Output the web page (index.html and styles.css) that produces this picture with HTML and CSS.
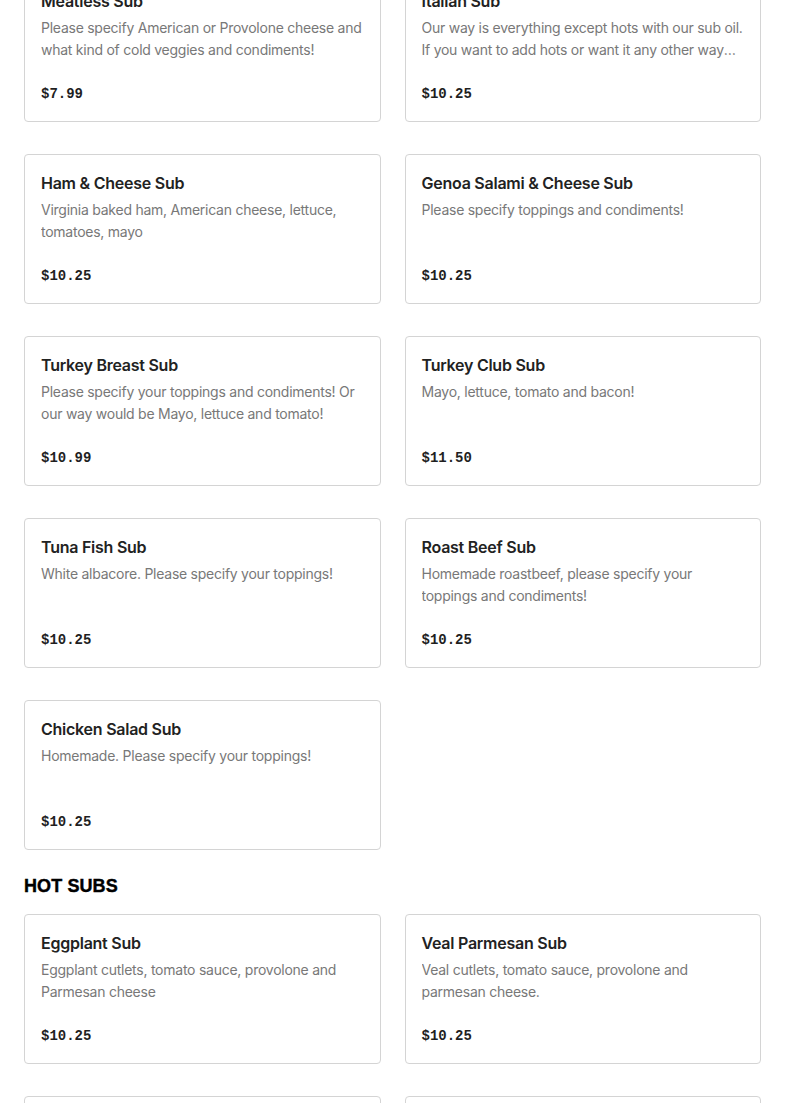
FILE: index.html
```html
<!DOCTYPE html>
<html lang="en">
<head>
<meta charset="utf-8">
<title>Menu</title>
<link rel="stylesheet" href="styles.css">
</head>
<body>
<main class="menu">
  <section class="section">
    <div class="grid">
      <article class="card">
        <h3 class="card-title">Meatless Sub</h3>
        <p class="card-desc">Please specify American or Provolone cheese and what kind of cold veggies and condiments!</p>
        <div class="card-price">$7.99</div>
      </article>
      <article class="card">
        <h3 class="card-title">Italian Sub</h3>
        <p class="card-desc">Our way is everything except hots with our sub oil. If you want to add hots or want it any other way please specify!</p>
        <div class="card-price">$10.25</div>
      </article>
      <article class="card">
        <h3 class="card-title">Ham &amp; Cheese Sub</h3>
        <p class="card-desc">Virginia baked ham, American cheese, lettuce, tomatoes, mayo</p>
        <div class="card-price">$10.25</div>
      </article>
      <article class="card">
        <h3 class="card-title">Genoa Salami &amp; Cheese Sub</h3>
        <p class="card-desc">Please specify toppings and condiments!</p>
        <div class="card-price">$10.25</div>
      </article>
      <article class="card">
        <h3 class="card-title">Turkey Breast Sub</h3>
        <p class="card-desc">Please specify your toppings and condiments! Or our way would be Mayo, lettuce and tomato!</p>
        <div class="card-price">$10.99</div>
      </article>
      <article class="card">
        <h3 class="card-title">Turkey Club Sub</h3>
        <p class="card-desc">Mayo, lettuce, tomato and bacon!</p>
        <div class="card-price">$11.50</div>
      </article>
      <article class="card">
        <h3 class="card-title">Tuna Fish Sub</h3>
        <p class="card-desc">White albacore. Please specify your toppings!</p>
        <div class="card-price">$10.25</div>
      </article>
      <article class="card">
        <h3 class="card-title">Roast Beef Sub</h3>
        <p class="card-desc">Homemade roastbeef, please specify your toppings and condiments!</p>
        <div class="card-price">$10.25</div>
      </article>
      <article class="card">
        <h3 class="card-title">Chicken Salad Sub</h3>
        <p class="card-desc">Homemade. Please specify your toppings!</p>
        <div class="card-price">$10.25</div>
      </article>
    </div>
  </section>
  <section class="section">
    <h2 class="section-title">HOT SUBS</h2>
    <div class="grid">
      <article class="card">
        <h3 class="card-title">Eggplant Sub</h3>
        <p class="card-desc">Eggplant cutlets, tomato sauce, provolone and Parmesan cheese</p>
        <div class="card-price">$10.25</div>
      </article>
      <article class="card">
        <h3 class="card-title">Veal Parmesan Sub</h3>
        <p class="card-desc">Veal cutlets, tomato sauce, provolone and parmesan cheese.</p>
        <div class="card-price">$10.25</div>
      </article>
      <article class="card">
        <h3 class="card-title">Chicken Parmesan Sub</h3>
        <p class="card-desc">Chicken cutlets, tomato sauce, provolone and parmesan cheese.</p>
        <div class="card-price">$10.25</div>
      </article>
      <article class="card">
        <h3 class="card-title">Meatball Sub</h3>
        <p class="card-desc">Homemade meatballs, tomato sauce, provolone and parmesan cheese.</p>
        <div class="card-price">$10.25</div>
      </article>
    </div>
  </section>
</main>
</body>
</html>
```

FILE: styles.css
```css
html, body {
  margin: 0;
  padding: 0;
  background: #ffffff;
}

body {
  font-family: "Inter", "Liberation Sans", sans-serif;
  color: #1f1f1f;
  overflow: hidden;
}

.menu {
  padding: 0 24px;
  margin-top: -28px;
}

.section + .section {
  margin-top: 24px;
}

.section-title {
  margin: 0 0 16px;
  font-family: "Liberation Sans", "Arial", sans-serif;
  font-weight: 900;
  font-size: 18px;
  line-height: 24px;
  color: #000;
  letter-spacing: 0.1px;
  -webkit-text-stroke: 0.4px #000;
}

.grid {
  display: grid;
  grid-template-columns: 1fr 1fr;
  column-gap: 24px;
  row-gap: 32px;
}

.card {
  border: 1px solid #d4d4d4;
  border-radius: 4px;
  padding: 16px 16px 17px;
  display: flex;
  flex-direction: column;
  box-sizing: border-box;
  height: 150px;
}

.card-title {
  margin: 0;
  font-size: 16px;
  line-height: 24px;
  font-weight: 600;
  color: #222;
  letter-spacing: -0.25px;
}

.card-desc {
  margin: 4px 0 0;
  font-size: 14px;
  line-height: 22px;
  color: #787878;
  letter-spacing: -0.25px;
  min-height: 44px;
  display: -webkit-box;
  -webkit-line-clamp: 2;
  -webkit-box-orient: vertical;
  overflow: hidden;
}

.card-price {
  margin-top: auto;
  font-family: "Liberation Mono", "Courier New", monospace;
  font-weight: 700;
  font-size: 14px;
  line-height: 20px;
  color: #1f1f1f;
}
```
